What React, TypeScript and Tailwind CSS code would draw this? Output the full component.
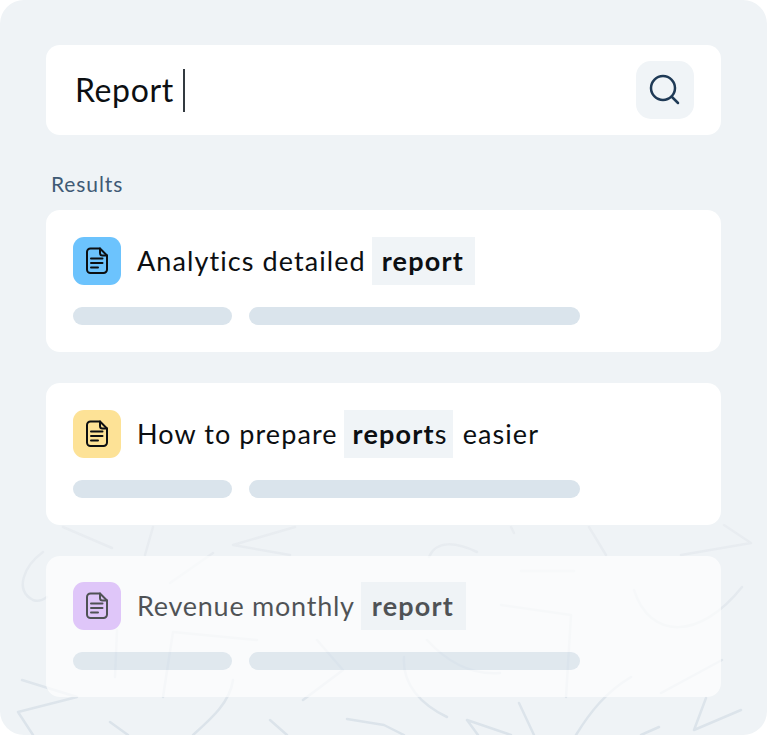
const DocIcon = () => (
  <svg width="28" height="28" viewBox="0 0 28 28" fill="none" stroke="currentColor" strokeWidth="2" strokeLinecap="round" strokeLinejoin="round">
    <path d="M7.5 1.5H17L24 8.5V22.5A3.5 3.5 0 0 1 20.5 26H7.5A3.5 3.5 0 0 1 4 22.5V5A3.5 3.5 0 0 1 7.5 1.5Z" />
    <path d="M17 1.5V6A2.5 2.5 0 0 0 19.5 8.5H24" />
    <path d="M8 11.5H19.5M8 16H19.5M8 20.5H15" />
  </svg>
);

const Hit = ({ children, rest, className }: { children: string; rest?: string; className: string }) => (
  <span className={`flex h-12 items-center bg-[#f0f4f7] ${className}`}>
    <span className="font-bold tracking-[1.2px]">{children}</span>
    {rest}
  </span>
);

const ResultCard = ({
  tile,
  faded,
  children,
}: {
  tile: string;
  faded?: boolean;
  children: React.ReactNode;
}) => (
  <div className={`rounded-[14px] bg-white px-[27px] ${faded ? "h-[141px] pt-[26px] opacity-70" : "h-[142px] pt-[27px]"}`}>
    <div className="flex h-12 items-center text-[27px] tracking-[1.08px] text-[#0c0f12]">
      <div className={`mr-[16px] flex h-12 w-12 items-center justify-center rounded-[11px] ${tile}`}>
        <DocIcon />
      </div>
      {children}
    </div>
    <div className="mt-[22px] flex gap-[17px]">
      <div className="h-[18px] w-[159px] rounded-full bg-[#dae4ec]" />
      <div className="h-[18px] w-[331px] rounded-full bg-[#dae4ec]" />
    </div>
  </div>
);

export default function App() {
  return (
    <div className="relative h-[735px] w-[767px] overflow-hidden rounded-[24px] bg-[#eff3f6] px-[46px] pt-[45px] font-['Lato',sans-serif]">
      {/* background scribbles */}
      <svg className="absolute inset-0" width="767" height="735" fill="none" strokeWidth="2.5" strokeLinecap="round" strokeLinejoin="round">
        <defs>
          <linearGradient id="fade" gradientUnits="userSpaceOnUse" x1="0" y1="525" x2="0" y2="735">
            <stop offset="0" stopColor="#e9edf1" />
            <stop offset="1" stopColor="#dbe3ea" />
          </linearGradient>
        </defs>
        <g stroke="url(#fade)">
          <path d="M63 527L112 548M153 527L145 555M295 527L233 545L290 555" />
          <path d="M43 552C24 566 14 590 33 600C38 602 43 600 47 597M213 553L170 583" />
          <path d="M117 630L115 677M257 640L173 632L163 697" />
          <path d="M22 680L77 697L18 712L33 735M110 722L128 735M270 720L287 735M347 719L384 725L404 735" />
          <path d="M233 680C230 702 212 718 193 735M317 640L343 670L303 700" />
          <path d="M511 527L514 533M589 527L606 555M724 525L751 543L681 555" />
          <path d="M429 557C436 540 456 542 477 552M521 571H574" />
          <path d="M634 590C650 640 700 640 742 587M501 605L571 615L566 697" />
          <path d="M722 660L661 693M404 657C402 685 422 705 447 717M427 640C450 665 475 675 500 673" />
          <path d="M519 703L534 735M467 720L511 735M467 720L478 735" />
          <path d="M631 677C606 692 590 712 576 735M659 727L641 735M706 698L694 730L741 710" />
        </g>
      </svg>

      <div className="relative">
        <div className="flex h-[90px] items-center justify-between rounded-[14px] bg-white pl-[29px] pr-[27px]">
          <div className="flex items-center text-[32px] tracking-[0.6px] text-[#0c0f12]">
            Report
            <span className="ml-[9px] h-[43px] w-[2px] bg-[#333a40]" />
          </div>
          <div className="flex h-[58px] w-[58px] items-center justify-center rounded-[15px] bg-[#f0f4f7]">
            <svg width="32" height="32" viewBox="0 0 32 32" fill="none" stroke="#1f3a56" strokeWidth="2.5" strokeLinecap="round">
              <circle cx="14" cy="14" r="12" />
              <path d="M23 23L29 29" />
            </svg>
          </div>
        </div>

        <p className="ml-[5px] mt-[36px] h-[39px] text-[21px] leading-[26px] tracking-[0.9px] text-[#3f5a75]">Results</p>

        <div className="flex flex-col gap-[31px]">
          <ResultCard tile="bg-[#6cc3fd]">
            <span>Analytics detailed</span>
            <Hit className="ml-[6px] pl-[10px] pr-[11px]">report</Hit>
          </ResultCard>
          <ResultCard tile="bg-[#fde296]">
            <span>How to prepare</span>
            <Hit rest="s" className="ml-[6px] pl-[9px] pr-[5px]">report</Hit>
            <span className="ml-[10px]">easier</span>
          </ResultCard>
          <ResultCard tile="bg-[#d9b3fb]" faded>
            <span className="tracking-[0.75px]">Revenue monthly</span>
            <Hit className="ml-[6px] pl-[11px] pr-[12px]">report</Hit>
          </ResultCard>
        </div>
      </div>
    </div>
  );
}
